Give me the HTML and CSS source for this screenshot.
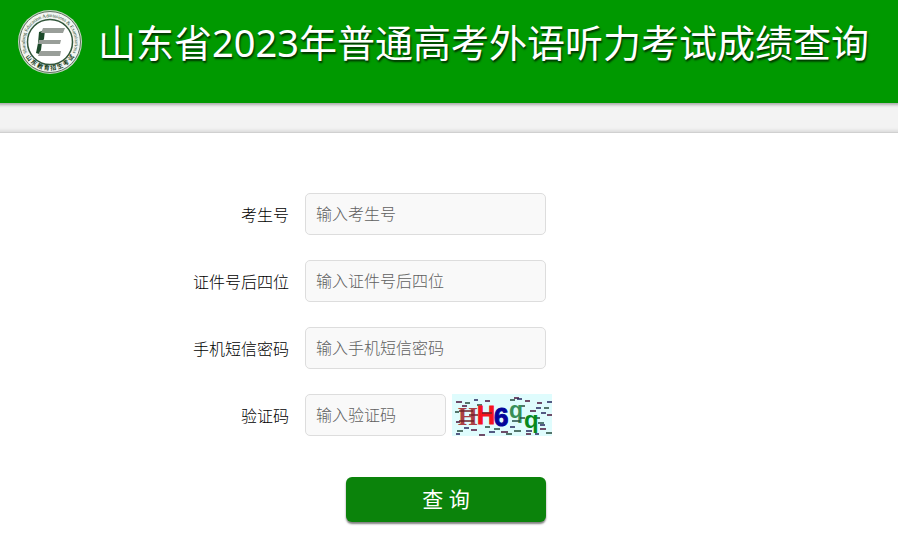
FILE: index.html
```html
<!DOCTYPE html>
<html lang="zh-CN">
<head>
    <meta charset="UTF-8">
    <meta name="viewport" content="width=device-width, initial-scale=1.0">
    <title>山东省2023年普通高考外语听力考试成绩查询</title>
    <link rel="stylesheet" href="styles.css">
</head>
<body>
    <header class="header">
        <svg class="logo" viewBox="0 0 66 66" aria-hidden="true">
            <defs>
                <path id="arc-top" d="M11 45 A25 25 0 1 1 55 45"/>
                <path id="arc-bottom" d="M5 38 A28.500 28.500 0 0 0 61 38"/>
            </defs>
            <circle cx="33" cy="33" r="32" fill="#c5d5c5"/>
            <circle cx="33" cy="33" r="30.500" fill="#f2f5f2" stroke="#5d735d" stroke-width="1"/>
            <circle cx="33" cy="33" r="22.500" fill="#fff" stroke="#31553a" stroke-width="1.500"/>
            <text class="logo-en"><textPath href="#arc-top" startOffset="50%" text-anchor="middle">Shandong Education Admissions &amp; Examinations</textPath></text>
            <text class="logo-cn"><textPath href="#arc-bottom" startOffset="50%" text-anchor="middle">山 东 教 育 招 生 考 试</textPath></text>
            <path d="M22 23l6-2-1 9-2 3-1 8-2 4-3-1 2-10z" fill="#1c4a2a"/>
            <path d="M26 19h22l-2 5H24zM22 31h22l-1 4H21zM23 42h21l-1 5H21z" fill="#999e99"/>
        </svg>
        <h1>山东省2023年普通高考外语听力考试成绩查询</h1>
    </header>
    <div class="bar"></div>
    <main>
        <form class="query-form" onsubmit="return false;">
            <div class="row">
                <label for="ksh">考生号</label>
                <input type="text" id="ksh" placeholder="输入考生号">
            </div>
            <div class="row">
                <label for="zjh">证件号后四位</label>
                <input type="text" id="zjh" placeholder="输入证件号后四位">
            </div>
            <div class="row">
                <label for="sjmm">手机短信密码</label>
                <input type="password" id="sjmm" placeholder="输入手机短信密码">
            </div>
            <div class="row">
                <label for="yzm">验证码</label>
                <input type="text" id="yzm" class="short" placeholder="输入验证码">
                <svg class="captcha" viewBox="0 0 100 42" role="img" aria-label="验证码">
                    <rect width="100" height="42" fill="#dffcfd"/>
                    <g fill="none" stroke-width="1.500">
                        <path stroke="#4a1238" d="M4 8h6M33 7h5M62 4h5M73 7h5M85 9h5M95 21h5M10 12h5M78 17h6M4 28h4M19 36h6M49 38h7M88 35h6M27 41h6M74 40h5"/>
                        <path stroke="#26483b" d="M13 9h5M25 11h5M58 6h5M92 14h5M82 24h6M5 37h6M42 35h6M62 37h7M94 39h6M68 12h5M3 18h4M54 40h6M33 33h5"/>
                        <path stroke="#26265c" d="M12 34h5M65 5h5M88 31h5M95 8h5M74 37h6M4 40h4M37 38h6M83 40h4M84 14h5M22 6h4M89 19h5M58 33h5"/>
                    </g>
                    <g class="captcha-text">
                        <text x="6" y="31" font-size="25" fill="#aa4045" font-family="Liberation Serif">H</text>
                        <text x="25" y="30" font-size="25" fill="#f5141c" stroke="#f5141c">H</text>
                        <text x="42" y="32" font-size="26" fill="#04049a" stroke="#04049a">6</text>
                        <text x="57" y="24" font-size="23" fill="#388f58">q</text>
                        <text x="72" y="34" font-size="24" fill="#07891c">q</text>
                    </g>
                    <g fill="none" stroke-width="1.500">
                        <path stroke="#6d2229" d="M7 17h14M17 21h9M7 27h15M30 19h10"/>
                        <path stroke="#254c46" d="M60 27h8M68 24h5M86 29h6"/>
                    </g>
                </svg>
            </div>
            <div class="actions">
                <button type="submit">查 询</button>
            </div>
        </form>
    </main>
</body>
</html>
```

FILE: styles.css
```css
* {
    box-sizing: border-box;
}
body {
    margin: 0;
    background: #fff;
    color: #000;
    font-family: "Noto Sans", "Noto Sans CJK SC", sans-serif;
    font-size: 16px;
    font-weight: 300;
}
.header {
    display: flex;
    align-items: flex-start;
    gap: 15px;
    padding: 9px 17px 28px;
    background: #009900;
}
.logo {
    flex: none;
    width: 66px;
    height: 66px;
}
.logo-en {
    font-family: "Liberation Serif", serif;
    font-size: 5px;
    font-weight: 400;
    fill: #173e22;
}
.logo-cn {
    font-family: "Noto Sans CJK SC", sans-serif;
    font-size: 6px;
    font-weight: bold;
    fill: #173e22;
}
.header h1 {
    margin: 0;
    color: #fff;
    font-size: 38px;
    font-weight: 400;
    line-height: 66px;
    white-space: nowrap;
    text-shadow: 1px 2px 2px rgba(0, 0, 0, 0.7);
}
.bar {
    height: 30px;
    background: #f3f3f3;
    border-bottom: 1px solid #d0d0d0;
    box-shadow: inset 0 5px 3px -3px #aaa, inset 0 -5px 3px -3px #ddd;
}
.query-form {
    max-width: 640px;
    margin: 0 auto;
    padding: 60px 0 16px;
}
.row {
    display: flex;
    align-items: center;
    margin-bottom: 25px;
}
.row label {
    width: 160px;
    margin-right: 16px;
    text-align: right;
}
.row input {
    width: 241px;
    height: 42px;
    padding: 0 10px;
    border: 1px solid #ddd;
    border-radius: 5px;
    background: #f9f9f9;
    color: #222;
    font: inherit;
}
.row input.short {
    width: 141px;
}
.row input::placeholder {
    color: #606060;
}
.captcha {
    width: 100px;
    height: 42px;
    margin-left: 6px;
}
.captcha-text {
    font-family: "Liberation Sans", sans-serif;
    font-weight: bold;
}
.actions {
    display: flex;
    justify-content: flex-end;
    width: 417px;
    padding-top: 16px;
}
button {
    width: 200px;
    height: 45px;
    padding: 0 0 4px;
    border: none;
    border-radius: 6px;
    background: #0b830b;
    color: #fff;
    font: inherit;
    font-size: 21px;
    font-weight: 400;
    box-shadow: 0 2px 2px rgba(0, 0, 0, 0.5);
    cursor: pointer;
}
button:hover {
    background: #097309;
}
```
